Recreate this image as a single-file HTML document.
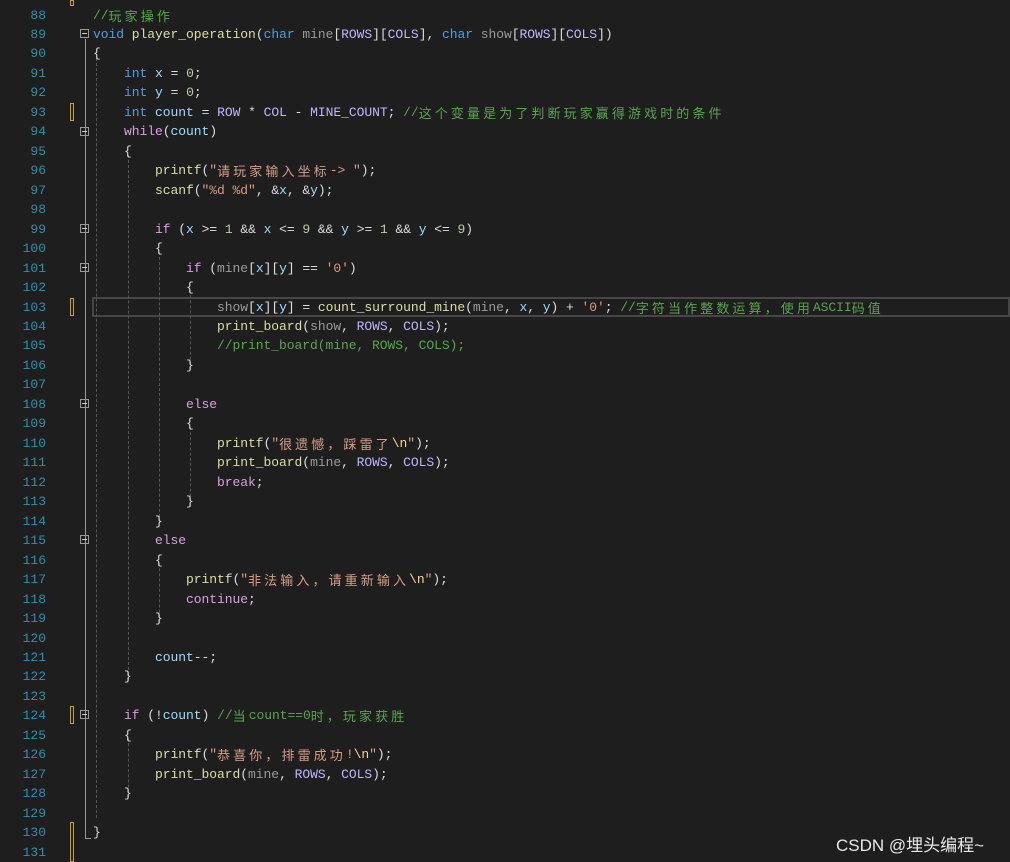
<!DOCTYPE html>
<html><head><meta charset="utf-8"><style>
body{margin:0;width:1010px;height:862px;background:#1e1e1e;overflow:hidden;position:relative;font-family:"Liberation Mono","Noto Sans CJK SC",monospace;font-size:13px;}
.ln{position:absolute;left:0;width:46px;text-align:right;color:#2b91af;}
.cd{position:absolute;left:93px;white-space:pre;color:#dcdcdc;letter-spacing:-0.05px;}
.r{position:absolute;height:19.47px;line-height:19.47px;overflow:hidden}
.k{color:#569cd6}.f{color:#dcdcaa}.v{color:#9cdcfe}.p{color:#9a9a9a}.m{color:#beb7ff}.s{color:#d69d85}.c{color:#57a64a}.cf{color:#d8a0df}.e{color:#ffd68f}.n{color:#b5cea8}
.z{font-family:"Noto Sans CJK SC",sans-serif;letter-spacing:3.1px;display:inline-block;line-height:19.47px;vertical-align:top;height:19.47px}
.fold{position:absolute;left:80px;width:9px;height:9px;border:1px solid #999;box-sizing:border-box}
.fold:after{content:"";position:absolute;left:1px;right:1px;top:3px;height:1px;background:#ccc}
.mk{position:absolute;left:70px;width:4px;border:1px solid #c8a400;box-sizing:border-box}
.dg{position:absolute;border-left:1px dashed #555;}
</style></head><body>
<div style="position:absolute;left:92px;top:297px;width:918px;height:20px;border:2px solid #464646;box-sizing:border-box"></div>
<div style="position:absolute;left:85px;top:39px;width:1px;height:800px;background:#9a9a9a"></div>
<div style="position:absolute;left:85px;top:838px;width:6px;height:1px;background:#9a9a9a"></div>
<div class="dg" style="left:96px;top:58px;height:760px"></div>
<div class="dg" style="left:128px;top:155px;height:525px"></div>
<div class="dg" style="left:159px;top:252px;height:270px"></div>
<div class="dg" style="left:159px;top:563px;height:60px"></div>
<div class="dg" style="left:128px;top:738px;height:60px"></div>
<div class="dg" style="left:190px;top:290px;height:80px"></div>
<div class="dg" style="left:190px;top:427px;height:80px"></div>
<div class="mk" style="top:103px;height:18px"></div>
<div class="mk" style="top:298px;height:18px"></div>
<div class="mk" style="top:706px;height:18px"></div>
<div class="mk" style="top:822px;height:40px"></div>
<div class="mk" style="top:0;height:6px"></div>
<div class="fold" style="top:29px"></div><div class="fold" style="top:127px"></div><div class="fold" style="top:224px"></div><div class="fold" style="top:263px"></div><div class="fold" style="top:399px"></div><div class="fold" style="top:535px"></div><div class="fold" style="top:710px"></div>
<div id="L"></div>
<div style="position:absolute;left:836px;top:831px;color:#e8e8e8;font-family:'Liberation Sans','Noto Sans CJK SC',sans-serif;font-size:17px">CSDN @埋头编程~</div>
<script>
var code=[
'<span class="c">//<span class="z">玩家操作</span></span>',
'<span class="k">void</span> <span class="f">player_operation</span>(<span class="k">char</span> <span class="p">mine</span>[<span class="m">ROWS</span>][<span class="m">COLS</span>], <span class="k">char</span> <span class="p">show</span>[<span class="m">ROWS</span>][<span class="m">COLS</span>])',
'{',
'    <span class="k">int</span> <span class="v">x</span> = <span class="n">0</span>;',
'    <span class="k">int</span> <span class="v">y</span> = <span class="n">0</span>;',
'    <span class="k">int</span> <span class="v">count</span> = <span class="m">ROW</span> * <span class="m">COL</span> - <span class="m">MINE_COUNT</span>; <span class="c">//<span class="z">这个变量是为了判断玩家赢得游戏时的条件</span></span>',
'    <span class="cf">while</span>(<span class="v">count</span>)',
'    {',
'        <span class="f">printf</span>(<span class="s">"<span class="z">请玩家输入坐标</span>-&gt; "</span>);',
'        <span class="f">scanf</span>(<span class="s">"%d %d"</span>, &amp;<span class="v">x</span>, &amp;<span class="v">y</span>);',
'',
'        <span class="cf">if</span> (<span class="v">x</span> &gt;= <span class="n">1</span> &amp;&amp; <span class="v">x</span> &lt;= <span class="n">9</span> &amp;&amp; <span class="v">y</span> &gt;= <span class="n">1</span> &amp;&amp; <span class="v">y</span> &lt;= <span class="n">9</span>)',
'        {',
'            <span class="cf">if</span> (<span class="p">mine</span>[<span class="v">x</span>][<span class="v">y</span>] == <span class="s">\'0\'</span>)',
'            {',
'                <span class="p">show</span>[<span class="v">x</span>][<span class="v">y</span>] = <span class="f">count_surround_mine</span>(<span class="p">mine</span>, <span class="v">x</span>, <span class="v">y</span>) + <span class="s">\'0\'</span>; <span class="c">//<span class="z">字符当作整数运算，使用</span>ASCII<span class="z">码值</span></span>',
'                <span class="f">print_board</span>(<span class="p">show</span>, <span class="m">ROWS</span>, <span class="m">COLS</span>);',
'                <span class="c">//print_board(mine, ROWS, COLS);</span>',
'            }',
'',
'            <span class="cf">else</span>',
'            {',
'                <span class="f">printf</span>(<span class="s">"<span class="z">很遗憾，踩雷了</span><span class="e">\\n</span>"</span>);',
'                <span class="f">print_board</span>(<span class="p">mine</span>, <span class="m">ROWS</span>, <span class="m">COLS</span>);',
'                <span class="cf">break</span>;',
'            }',
'        }',
'        <span class="cf">else</span>',
'        {',
'            <span class="f">printf</span>(<span class="s">"<span class="z">非法输入，请重新输入</span><span class="e">\\n</span>"</span>);',
'            <span class="cf">continue</span>;',
'        }',
'',
'        <span class="v">count</span>--;',
'    }',
'',
'    <span class="cf">if</span> (!<span class="v">count</span>) <span class="c">//<span class="z">当</span>count==0<span class="z">时，玩家获胜</span></span>',
'    {',
'        <span class="f">printf</span>(<span class="s">"<span class="z">恭喜你，排雷成功</span>!<span class="e">\\n</span>"</span>);',
'        <span class="f">print_board</span>(<span class="p">mine</span>, <span class="m">ROWS</span>, <span class="m">COLS</span>);',
'    }',
'',
'}',
''];
var h='';
for(var i=0;i<code.length;i++){var t=5.5+i*19.47;
h+='<div class="r ln" style="top:'+t+'px">'+(88+i)+'</div><div class="r cd" style="top:'+t+'px">'+code[i]+'</div>';}
h+='<div class="r ln" style="top:-14px">87</div>';
document.getElementById('L').innerHTML=h;
</script>
</body></html>
